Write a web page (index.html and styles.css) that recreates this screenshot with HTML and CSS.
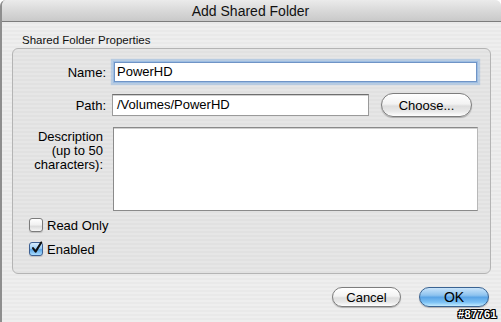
FILE: index.html
```html
<!DOCTYPE html>
<html>
<head>
<meta charset="utf-8">
<link rel="stylesheet" href="styles.css">
</head>
<body>
<div class="window">
  <div class="titlebar">Add Shared Folder</div>
  <div class="content">
    <div class="group-label">Shared Folder Properties</div>
    <div class="group-box">
      <div class="row">
        <label class="lbl">Name:</label>
        <div class="field focused">PowerHD</div>
      </div>
      <div class="row row-path">
        <label class="lbl">Path:</label>
        <div class="path-line">
          <div class="field path">/Volumes/PowerHD</div>
          <button class="btn choose">Choose...</button>
        </div>
      </div>
      <div class="row row-desc">
        <label class="lbl lbl-desc">Description<br>(up to 50<br>characters):</label>
        <div class="field area"></div>
      </div>
      <div class="check-row first">
        <span class="checkbox"></span>
        <span class="check-label">Read Only</span>
      </div>
      <div class="check-row">
        <span class="checkbox checked">
          <svg width="14" height="14" viewBox="0 0 14 14"><path d="M3 7.2 L5.6 10.6 L11.2 1.5" fill="none" stroke="#111" stroke-width="2.1" stroke-linecap="round" stroke-linejoin="round"/></svg>
        </span>
        <span class="check-label">Enabled</span>
      </div>
    </div>
    <div class="buttons">
      <button class="btn cancel">Cancel</button>
      <button class="btn ok">OK</button>
    </div>
  </div>
  <div class="watermark">#87761</div>
</div>
</body>
</html>
```
FILE: styles.css
```css
html, body {
  margin: 0;
  padding: 0;
}
body {
  width: 501px;
  height: 322px;
  overflow: hidden;
  background: #ffffff;
  font-family: "Liberation Sans", Arial, sans-serif;
  color: #000;
}
.window {
  position: relative;
  width: 501px;
  height: 322px;
  box-sizing: border-box;
  border-left: 2px solid #8e8e8e;
  border-radius: 6px 6px 0 0;
  background: repeating-linear-gradient(to bottom, #eeeeee 0, #eeeeee 2px, #e9e9e9 2px, #e9e9e9 4px);
  overflow: hidden;
}
.titlebar {
  height: 22px;
  box-sizing: border-box;
  border-bottom: 1px solid #7c7c7c;
  background: linear-gradient(to bottom, #ebebeb 0%, #d9d9d9 50%, #c9c9c9 100%);
  text-align: center;
  font-size: 14px;
  line-height: 22px;
  padding-right: 2px;
  color: #111;
}
.content {
  padding: 12px 0 0 10px;
}
.group-label {
  font-size: 11.5px;
  line-height: 13px;
  height: 14px;
  padding-left: 10px;
  color: #111;
}
.group-box {
  width: 479px;
  height: 226px;
  box-sizing: border-box;
  border: 1px solid #b4b4b4;
  border-radius: 6px;
  background: repeating-linear-gradient(to bottom, #e6e6e6 0, #e6e6e6 2px, #e1e1e1 2px, #e1e1e1 4px);
  padding: 13px 12px 0 16px;
  font-size: 13px;
}
.row {
  display: grid;
  grid-template-columns: 77px 1fr;
  column-gap: 6px;
  align-items: center;
}
.row-path {
  margin-top: 11px;
}
.row-desc {
  margin-top: 10px;
  align-items: start;
}
.lbl {
  text-align: right;
  white-space: nowrap;
}
.lbl-desc {
  line-height: 14px;
  padding-top: 3px;
  padding-right: 3px;
}
.field {
  box-sizing: border-box;
  background: #fff;
  border: 1px solid #9a9a9a;
  border-top-color: #6f6f6f;
  box-shadow: inset 0 1px 0 #d0d0d0;
  height: 22px;
  line-height: 20px;
  padding-left: 4px;
  white-space: nowrap;
}
.focused {
  height: 20px;
  line-height: 18px;
  margin: 0 1px 0 2px;
  border: 1px solid #6f94c6;
  box-shadow: 0 0 0 1px #9dbde2, 0 0 1px 3px rgba(150, 185, 225, 0.55);
  padding-left: 2px;
}
.path-line {
  display: flex;
  align-items: center;
}
.field.path {
  width: 257px;
}
.field.area {
  height: 84px;
  margin-left: 1px;
  border: 1px solid #8a8a8a;
  border-right-color: #b8b8b8;
}
.btn {
  font-family: "Liberation Sans", Arial, sans-serif;
  font-size: 13px;
  color: #000;
  border: 1px solid #7d7d7d;
  border-radius: 11px;
  padding: 0;
  background: linear-gradient(to bottom, #ffffff 0%, #f3f3f3 45%, #dedede 55%, #e9e9e9 80%, #ffffff 100%);
  box-shadow: 0 1px 1px rgba(0, 0, 0, 0.25);
  cursor: default;
}
.choose {
  margin-left: 12px;
  width: 91px;
  height: 24px;
  border-radius: 12px;
}
.check-row {
  display: flex;
  align-items: center;
  height: 14px;
  margin-top: 10px;
}
.check-row.first {
  margin-top: 7px;
}
.checkbox {
  width: 14px;
  height: 14px;
  box-sizing: border-box;
  border: 1px solid #7b7b7b;
  border-radius: 3px;
  background: linear-gradient(to bottom, #ffffff 0%, #f0f0f0 50%, #dcdcdc 60%, #f6f6f6 100%);
  box-shadow: 0 1px 1px rgba(0, 0, 0, 0.15);
  position: relative;
}
.checkbox svg {
  position: absolute;
  left: 0;
  top: -2px;
}
.checkbox.checked {
  border-color: #3c5f92;
  background: linear-gradient(to bottom, #d7ecfc 0%, #9ccdf5 45%, #5da8e8 55%, #a9dcff 100%);
}
.check-label {
  margin-left: 4px;
}
.buttons {
  display: flex;
  justify-content: flex-end;
  gap: 18px;
  padding-right: 12px;
  margin-top: 13px;
}
.cancel {
  width: 69px;
  height: 20px;
}
.ok {
  width: 70px;
  height: 20px;
  font-size: 14px;
  border-color: #3a6392;
  background: linear-gradient(to bottom, #c9e4fa 0%, #8ec3ef 40%, #5aa4e6 52%, #7ec3f5 80%, #c4ecff 100%);
}
.watermark {
  position: absolute;
  right: 4px;
  bottom: 2px;
  font-family: "Liberation Sans", Arial, sans-serif;
  font-weight: bold;
  font-size: 11px;
  color: #fff;
  letter-spacing: 0.4px;
  text-shadow: 1px 0 0 #000, -1px 0 0 #000, 0 1px 0 #000, 0 -1px 0 #000, 1px 1px 0 #000, -1px -1px 0 #000, 1px -1px 0 #000, -1px 1px 0 #000;
}
```
